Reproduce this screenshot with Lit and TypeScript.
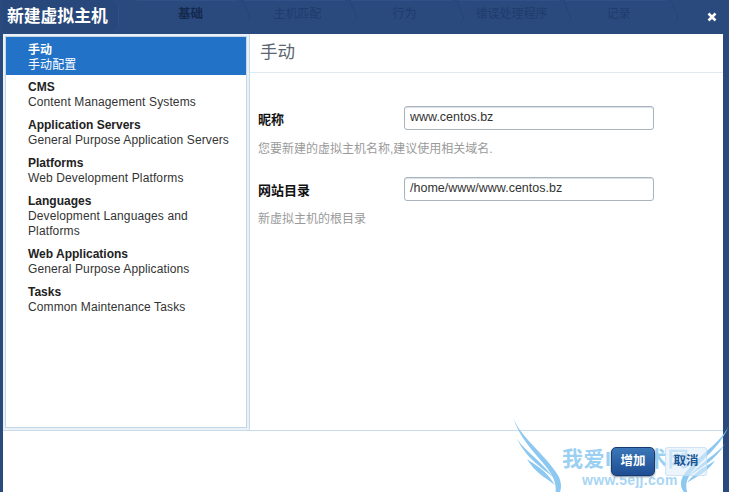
import { LitElement, html, css, svg } from "lit";
import { customElement } from "lit/decorators.js";

const cats = [
  { t: "手动", d: ["手动配置"], sel: true },
  { t: "CMS", d: ["Content Management Systems"] },
  { t: "Application Servers", d: ["General Purpose Application Servers"] },
  { t: "Platforms", d: ["Web Development Platforms"] },
  { t: "Languages", d: ["Development Languages and", "Platforms"] },
  { t: "Web Applications", d: ["General Purpose Applications"] },
  { t: "Tasks", d: ["Common Maintenance Tasks"] },
];
const tabs = ["基础", "主机匹配", "行为", "错误处理程序", "记录"];

const wing = (flip: boolean) => svg`
  <g transform=${flip ? "translate(216 8) scale(-1 0.85)" : ""} fill="#8cc8f0">
    <path d="M0 0 C8 22 32 36 46 60 C50 70 48 78 40 84 C46 70 42 60 30 46 C20 34 6 20 0 0Z"/>
    <path d="M4 22 C12 34 26 42 40 60 C28 50 14 42 4 22Z"/>
    <path d="M14 42 C22 48 32 52 42 68 C32 60 22 56 14 42Z"/>
  </g>`;

@customElement("app-root")
export class AppRoot extends LitElement {
  static styles = css`
    :host { display: block; width: 729px; height: 492px; position: relative; overflow: hidden; font-family: "Liberation Sans", Arial, "Noto Sans CJK SC", sans-serif; background: #2a4a7e; }
    .top { display: flex; height: 34px; background: #2a4a7e; box-sizing: border-box; }
    .title { width: 115px; height: 32px; margin-left: 3px; box-sizing: border-box; padding: 5px 0 0 4px; color: #fff; font-size: 16.8px; font-weight: bold; line-height: 24px; white-space: nowrap; background: #28477a; border-radius: 0 7px 7px 0; box-shadow: 1px 0 0 #2f5088; }
    .tabs { display: flex; margin-left: 19px; height: 23px; }
    .tab { position: relative; width: 107px; height: 23px; flex: none; box-sizing: border-box; text-align: center; font-size: 12px; line-height: 29px; color: #1f3c6c; white-space: nowrap; }
    .tab.on { color: #14294e; font-weight: bold; font-size: 12.5px; }
    .tab::after { content: ""; position: absolute; right: -4px; top: 0; height: 23px; width: 12px; border-right: 1px solid #254373; border-bottom-right-radius: 8px; transform: skewX(22deg); }
    .tab::before { content: ""; position: absolute; left: 0; right: 6px; top: 0; border-top: 1px solid #2f5188; }
    .close { margin-left: auto; margin-right: 12px; margin-top: 12px; width: 10px; height: 10px; }
    .main { display: flex; flex-direction: column; margin-left: 3px; width: 720px; height: 458px; background: #fff; }
    .body { display: flex; height: 396px; border-bottom: 1px solid #c8dcea; box-sizing: content-box; }
    .side { width: 247px; flex: none; box-sizing: border-box; background: #eaf1f8; padding: 2px 2px 0 2px; border-right: 1px solid #c8d8e6; height: 396px; }
    .list { height: 392px; box-sizing: border-box; background: #fff; border: 1px solid #c4d6e4; }
    .cat { padding: 4px 8px 4px 22px; color: #333; font-size: 12px; line-height: 15px; letter-spacing: 0.12px; }
    .cat b { display: block; color: #222; letter-spacing: 0; }
    .cat span { display: block; }
    .cat.sel { background: #2273c8; color: #fff; padding: 6px 8px 0 22px; margin-bottom: 1px; height: 32px; }
    .cat.sel b { color: #fff; }
    .content { flex: 1; }
    .head { height: 39px; border-bottom: 1px solid #dfe9f0; box-sizing: border-box; padding: 6px 0 0 10px; font-size: 17.5px; line-height: 24px; color: #5a6672; }
    .form { padding: 33px 0 0 8px; }
    .row { display: flex; align-items: center; height: 24px; }
    .row label { width: 146px; flex: none; font-size: 13px; font-weight: bold; color: #111; }
    .field { width: 250px; height: 24px; box-sizing: border-box; border: 1px solid #a9b4bf; border-radius: 3px; box-shadow: inset 0 1px 1px #d8dee4; padding: 0 5px; font-size: 12.5px; line-height: 21px; color: #333; background: #fff; }
    .hint { font-size: 12px; line-height: 16px; color: #9a9a9a; margin: 11px 0 20px; }
    .hint.last { margin-top: 10px; }
    .foot { flex: 1; display: flex; justify-content: flex-end; align-items: flex-start; padding: 16px 16px 0 0; gap: 10px; }
    .btn { position: relative; z-index: 2; box-sizing: border-box; width: 44px; height: 29px; border-radius: 5px; border: 1px solid #173a70; background: linear-gradient(#3a76b8, #1e4e94); color: #fff; font-size: 12.5px; font-weight: bold; text-align: center; line-height: 27px; box-shadow: 0 1px 2px #7a8ca0; }
    .btn2 { position: relative; z-index: 2; width: 42px; height: 29px; box-sizing: border-box; font-size: 12.5px; font-weight: bold; color: #1a5596; text-align: center; line-height: 27px; border: 1px solid rgba(190, 215, 240, 0.6); border-radius: 3px; background: rgba(225, 238, 250, 0.6); }
    .mark { position: absolute; left: 513px; top: 417px; width: 216px; height: 75px; z-index: 1; pointer-events: none; }
    .mark svg { position: absolute; left: 0; top: 0; }
    .mt { position: absolute; left: 49px; top: 29px; font-size: 21px; font-weight: bold; color: #9bd0f2; white-space: nowrap; letter-spacing: 0.5px; line-height: 26px; }
    .mu { position: absolute; left: 69px; top: 55px; font-size: 14px; font-weight: bold; color: #a9d6f3; white-space: nowrap; letter-spacing: 0.3px; line-height: 16px; }
  `;
  render() {
    return html`
      <div class="top">
        <div class="title">新建虚拟主机</div>
        <div class="tabs">
          ${tabs.map((t, i) => html`<div class="tab ${i === 0 ? "on" : ""}">${t}</div>`)}
        </div>
        <svg class="close" viewBox="0 0 10 10"><path d="M1.5 1.5 L8.5 8.5 M8.5 1.5 L1.5 8.5" stroke="#fff" stroke-width="2.6"/></svg>
      </div>
      <div class="main">
        <div class="body">
          <div class="side">
            <div class="list">
              ${cats.map((c) => html`<div class="cat ${c.sel ? "sel" : ""}"><b>${c.t}</b>${c.d.map((l) => html`<span>${l}</span>`)}</div>`)}
            </div>
          </div>
          <div class="content">
            <div class="head">手动</div>
            <div class="form">
              <div class="row"><label>昵称</label><div class="field">www.centos.bz</div></div>
              <div class="hint">您要新建的虚拟主机名称,建议使用相关域名.</div>
              <div class="row"><label>网站目录</label><div class="field">/home/www/www.centos.bz</div></div>
              <div class="hint last">新虚拟主机的根目录</div>
            </div>
          </div>
        </div>
        <div class="foot">
          <div class="btn">增加</div>
          <div class="btn2">取消</div>
        </div>
      </div>
      <div class="mark">
        <svg width="216" height="75" viewBox="0 0 216 75">${wing(false)}${wing(true)}</svg>
        <div class="mt">我爱IT技术网</div>
        <div class="mu">www.5ejj.com</div>
      </div>
    `;
  }
}
